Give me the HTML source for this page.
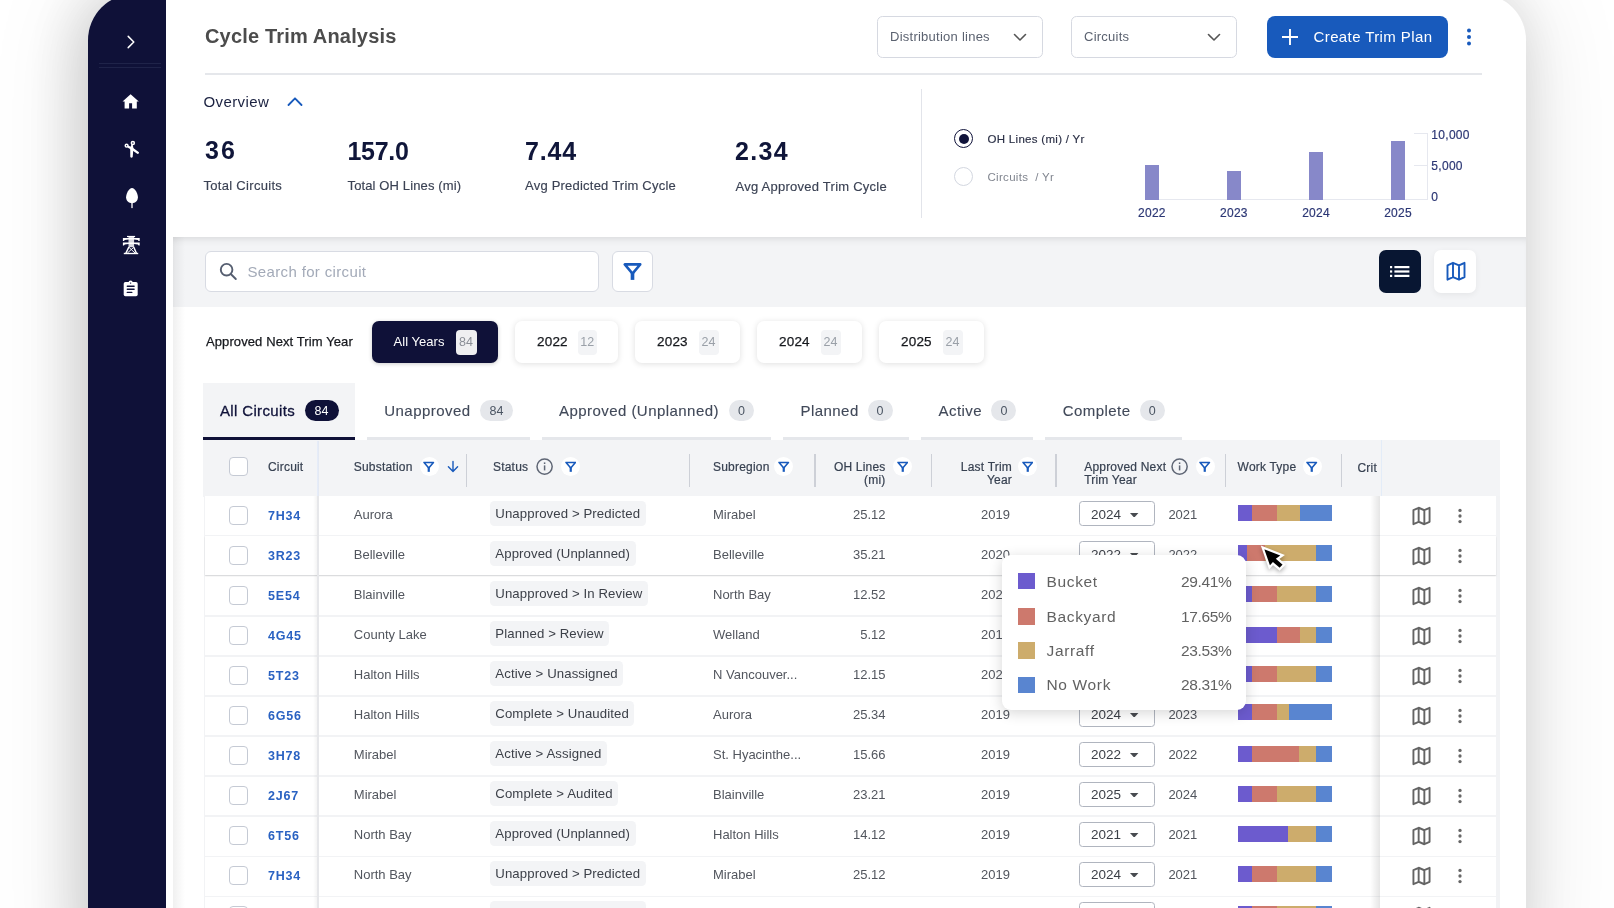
<!DOCTYPE html>
<html lang="en"><head><meta charset="utf-8"><title>Cycle Trim Analysis</title>
<style>
*{box-sizing:border-box;margin:0;padding:0}
html,body{width:1614px;height:908px;overflow:hidden;background:#fff}
body{position:relative;font-family:"Liberation Sans",sans-serif;color:#1f2937}
.abs{position:absolute}
.t{height:20px;line-height:20px;white-space:nowrap}
.hd{font-size:12px;color:#374151;letter-spacing:.2px;-webkit-text-stroke:.2px #374151}
.cell{font-size:13px;color:#52565e}
.cid{font-size:12.5px;font-weight:700;color:#2a62c2;letter-spacing:.8px}
.chip{height:25px;line-height:25px;background:#f3f4f6;border-radius:4.5px;font-size:13.2px;color:#3d4149;padding:0 5.5px;white-space:nowrap;letter-spacing:.1px}
.cb{width:18.5px;height:18.5px;border:1.6px solid #c5cad4;border-radius:4px;background:#fff}
.sel{width:76.5px;height:25.2px;border:1.2px solid #b0b5bf;border-radius:3.5px;background:#fff}
.sep{width:1.3px;background:#cdd0d7}
.row{left:204.6px;width:1291px;height:38.5px;background:#fff}
.pill{height:42px;border-radius:7px;background:#fff;box-shadow:0 1px 6px rgba(0,0,0,.13)}
.pb{height:25px;line-height:25px;width:20px;border-radius:4px;background:#f3f4f6;color:#9aa0a8;font-size:12.5px;text-align:center}
.tab{font-size:15px;color:#414959;letter-spacing:.45px;-webkit-text-stroke:.12px #414959}
.tb{height:21px;line-height:22.3px;border-radius:11px;background:#e5e7eb;color:#4b5563;font-size:12.5px;text-align:center}
.ul{height:3px;top:437px;background:#e5e7eb}
.tt{font-size:15.5px;color:#626262;letter-spacing:.65px}
.yr{font-size:12px;color:#2b3674;letter-spacing:.3px;-webkit-text-stroke:.18px #2b3674}
</style></head><body>
<div id="w" class="abs" style="left:0;top:0;width:1614px;height:908px;will-change:transform">

<div class="abs" style="left:88px;top:-6px;width:1438px;height:1000px;border-radius:46px;background:#fff;box-shadow:-10px 0 60px rgba(0,0,0,.15),0 0 100px rgba(0,0,0,.13)"></div>
<div class="abs" style="left:88px;top:-6px;width:78px;height:1000px;border-radius:46px 0 0 46px;background:#0f1138"></div>
<div class="abs" style="left:99px;top:62.6px;width:62px;height:1px;background:#1f2349"></div>
<div class="abs" style="left:99px;top:67.2px;width:62px;height:1px;background:#1f2349"></div>
<svg class="abs" style="left:124.8px;top:34.4px" width="12" height="16" viewBox="0 0 12 16"><path d="M3.2 2.4 8.8 8 3.2 13.6" fill="none" stroke="#fff" stroke-width="1.5" stroke-linecap="round" stroke-linejoin="round"/></svg>
<svg class="abs" style="left:120px;top:85px" width="24" height="24" viewBox="0 0 24 24"><path d="M10.6 9.3 18.8 16.5H16.8V23.6H12.1V18.35H9.1V23.6H4.6V16.5H2.5z" fill="#fff"/></svg>
<svg class="abs" style="left:120px;top:138px" width="24" height="24" viewBox="0 0 24 24"><g fill="#fff"><path d="M12.7 6.5 13.4 10 12.7 19Q11.5 20.3 10.3 19L10.2 10.5 11.5 6.3z"/><path d="M7.4 9.4 11 11.6 17.6 15.9Q19.3 15.7 19 14.2L12.5 9.5 8.2 7.5z"/></g><g fill="none" stroke="#fff" stroke-width="1.5"><circle cx="6.6" cy="7.7" r="1.35"/><circle cx="12.85" cy="5.05" r="1.5"/></g></svg>
<svg class="abs" style="left:124.8px;top:188px" width="14" height="21" viewBox="0 0 14 21"><path d="M7 .1C10 .1 12.9 5.6 12.9 9.3 12.9 12.8 10.3 15.2 7 15.2S1.1 12.8 1.1 9.3C1.1 5.6 4 .1 7 .1z" fill="#fff"/><rect x="6.35" y="13" width="1.3" height="7.1" fill="#fff"/></svg>
<svg class="abs" style="left:120px;top:232px" width="24" height="24" viewBox="0 0 24 24"><g fill="#fff"><rect x="7" y="3.9" width="8.1" height="1.2"/><rect x="8.5" y="5" width="5.6" height="10.2" opacity=".84"/><path d="M11.3 5.9H2.9V9H4L4.7 8.1 8.6 7.4H14L17.9 8.1 18.6 9H19.7V5.9z"/><path d="M11.3 10.4H2.9V13.5H4L4.7 12.6 8.6 11.9H14L17.9 12.6 18.6 13.5H19.7V10.4z"/><rect x="3.8" y="20.8" width="14.4" height="1.4"/></g><g fill="none" stroke="#fff"><path d="M8.9 15 5.9 21.2M13.7 15 16.4 21.2" stroke-width="1.5"/><path d="M9 15.4 15 21M13.6 15.4 7.4 21" stroke-width="1"/></g></svg>
<svg class="abs" style="left:120px;top:276px" width="24" height="24" viewBox="0 0 24 24"><rect x="3.7" y="6.1" width="14" height="14.2" rx="1.7" fill="#fff"/><circle cx="10.6" cy="6.7" r="2.1" fill="#fff"/><circle cx="10.6" cy="7.1" r=".7" fill="#0f1138"/><path d="M7.3 10.2H14.1M7.3 13.3H14.1M7.3 16.4H11.8" stroke="#0f1138" stroke-width="1.4" stroke-linecap="round" fill="none"/></svg>
<div class="abs" style="left:173px;top:236.8px;width:1353px;height:70.6px;background:#f3f4f6;box-shadow:inset 0 7px 8px -6px rgba(0,0,0,.13)"></div>
<div class="abs" style="left:173px;top:237px;width:12px;height:700px;background:linear-gradient(90deg,rgba(0,0,0,.06),rgba(0,0,0,0))"></div>
<div class="abs t " style="left:205px;top:26.5px;font-size:20px;font-weight:700;color:#4c4c4c;letter-spacing:.17px;height:30px;line-height:30px;margin-top:-5.6px">Cycle Trim Analysis</div>
<div class="abs" style="left:205px;top:73px;width:1277px;height:1.5px;background:#e5e7eb"></div>
<div class="abs" style="left:877px;top:15.6px;width:166px;height:42.2px;border:1.4px solid #d6d9e1;border-radius:5.5px;background:#fff"></div>
<div class="abs t " style="left:890px;top:26.5px;font-size:13px;color:#5b6270;letter-spacing:.25px">Distribution lines</div>
<svg class="abs" style="left:1013px;top:33px" width="14" height="9" viewBox="0 0 14 9"><path d="M1.5 1.5 7 7l5.5-5.5" fill="none" stroke="#555" stroke-width="1.6" stroke-linecap="round" stroke-linejoin="round"/></svg>
<div class="abs" style="left:1071px;top:15.6px;width:166px;height:42.2px;border:1.4px solid #d6d9e1;border-radius:5.5px;background:#fff"></div>
<div class="abs t " style="left:1084px;top:26.5px;font-size:13px;color:#5b6270;letter-spacing:.25px">Circuits</div>
<svg class="abs" style="left:1207px;top:33px" width="14" height="9" viewBox="0 0 14 9"><path d="M1.5 1.5 7 7l5.5-5.5" fill="none" stroke="#555" stroke-width="1.6" stroke-linecap="round" stroke-linejoin="round"/></svg>
<div class="abs" style="left:1266.8px;top:15.5px;width:181.4px;height:42.4px;border-radius:8px;background:#185abc"></div>
<svg class="abs" style="left:1281px;top:28px" width="18" height="18" viewBox="0 0 18 18"><path d="M9 1v16M1 9h16" stroke="#fff" stroke-width="1.9" fill="none"/></svg>
<div class="abs t " style="left:1313.5px;top:26.5px;font-size:15px;color:#fff;letter-spacing:.4px">Create Trim Plan</div>
<svg class="abs" style="left:1466px;top:27.8px;" width="6" height="18" viewBox="0 0 6 18"><circle cx="3" cy="2.4" r="2" fill="#185abc"/><circle cx="3" cy="9" r="2" fill="#185abc"/><circle cx="3" cy="15.6" r="2" fill="#185abc"/></svg>
<div class="abs t " style="left:203.5px;top:92px;font-size:15px;color:#1a2140;letter-spacing:.4px">Overview</div>
<svg class="abs" style="left:287px;top:96px" width="16" height="11" viewBox="0 0 16 11"><path d="M1.5 9 8 2.3 14.5 9" fill="none" stroke="#185abc" stroke-width="1.8" stroke-linecap="round" stroke-linejoin="round"/></svg>
<div class="abs t " style="left:205px;top:140px;font-size:25px;font-weight:700;color:#10163a;letter-spacing:2.2px;height:30px;line-height:30px;margin-top:-5px">36</div>
<div class="abs t " style="left:203.5px;top:176.4px;font-size:13px;color:#3b4254;letter-spacing:0.3px;-webkit-text-stroke:.15px #3b4254">Total Circuits</div>
<div class="abs t " style="left:347.5px;top:141px;font-size:25px;font-weight:700;color:#10163a;letter-spacing:-0.3px;height:30px;line-height:30px;margin-top:-5px">157.0</div>
<div class="abs t " style="left:347.5px;top:176.4px;font-size:13px;color:#3b4254;letter-spacing:0.13px;-webkit-text-stroke:.15px #3b4254">Total OH Lines (mi)</div>
<div class="abs t " style="left:525px;top:141px;font-size:25px;font-weight:700;color:#10163a;letter-spacing:0.8px;height:30px;line-height:30px;margin-top:-5px">7.44</div>
<div class="abs t " style="left:525px;top:176.4px;font-size:13px;color:#3b4254;letter-spacing:0.22px;-webkit-text-stroke:.15px #3b4254">Avg Predicted Trim Cycle</div>
<div class="abs t " style="left:735px;top:141px;font-size:25px;font-weight:700;color:#10163a;letter-spacing:1.3px;height:30px;line-height:30px;margin-top:-5px">2.34</div>
<div class="abs t " style="left:735.5px;top:177.4px;font-size:13px;color:#3b4254;letter-spacing:0.25px;-webkit-text-stroke:.15px #3b4254">Avg Approved Trim Cycle</div>
<div class="abs" style="left:920.5px;top:89px;width:1.3px;height:129px;background:#e2e4ea"></div>
<div class="abs" style="left:954.2px;top:129.4px;width:19px;height:19px;border-radius:50%;border:1.8px solid #10133a;background:#fff"></div>
<div class="abs" style="left:958.7px;top:133.9px;width:10px;height:10px;border-radius:50%;background:#10133a"></div>
<div class="abs" style="left:954.3px;top:167.3px;width:19px;height:19px;border-radius:50%;border:1.8px solid #d3d7e0;background:#fff"></div>
<div class="abs t " style="left:987.5px;top:129px;font-size:11.5px;color:#2a2f45;letter-spacing:.3px;-webkit-text-stroke:.15px #2a2f45">OH Lines (mi) / Yr</div>
<div class="abs t " style="left:987.5px;top:167px;font-size:11.5px;color:#80858f;letter-spacing:.3px">Circuits&nbsp; / Yr</div>
<div class="abs" style="left:1144.5px;top:199.2px;width:283.5px;height:1.2px;background:#e6e8ef"></div>
<div class="abs" style="left:1427.3px;top:133px;width:1.2px;height:67px;background:#e6e8ef"></div>
<div class="abs" style="left:1413.5px;top:133px;width:14px;height:1.2px;background:#e6e8ef"></div>
<div class="abs" style="left:1413.5px;top:165.3px;width:14px;height:1.2px;background:#e6e8ef"></div>
<div class="abs" style="left:1145px;top:165px;width:13.8px;height:34.7px;background:#8788c9"></div>
<div class="abs t yr" style="left:1051.9px;width:200px;text-align:center;top:202.7px;">2022</div>
<div class="abs" style="left:1227px;top:171.3px;width:13.8px;height:28.4px;background:#8788c9"></div>
<div class="abs t yr" style="left:1133.9px;width:200px;text-align:center;top:202.7px;">2023</div>
<div class="abs" style="left:1309.2px;top:152.2px;width:13.8px;height:47.5px;background:#8788c9"></div>
<div class="abs t yr" style="left:1216.1px;width:200px;text-align:center;top:202.7px;">2024</div>
<div class="abs" style="left:1391.2px;top:140.8px;width:13.8px;height:58.9px;background:#8788c9"></div>
<div class="abs t yr" style="left:1298.1px;width:200px;text-align:center;top:202.7px;">2025</div>
<div class="abs t yr" style="left:1431.3px;top:124.8px;">10,000</div>
<div class="abs t yr" style="left:1431.3px;top:155.6px;">5,000</div>
<div class="abs t yr" style="left:1431.3px;top:187px;">0</div>
<div class="abs" style="left:205.2px;top:250.7px;width:394px;height:41.6px;border:1.4px solid #d8dbe3;border-radius:6px;background:#fff"></div>
<svg class="abs" style="left:218px;top:261px" width="20" height="20" viewBox="0 0 20 20"><circle cx="8.6" cy="8.7" r="5.8" fill="none" stroke="#555e70" stroke-width="1.9"/><path d="M12.8 13l5 5" stroke="#555e70" stroke-width="1.9" stroke-linecap="round"/></svg>
<div class="abs t " style="left:247.5px;top:261.5px;font-size:15px;color:#a3aab8;letter-spacing:.35px">Search for circuit</div>
<div class="abs" style="left:611.5px;top:250.7px;width:41px;height:41.6px;border:1.4px solid #d8dbe3;border-radius:6px;background:#fff"></div>
<svg class="abs" style="left:622.5px;top:262.3px" width="19" height="19" viewBox="0 0 12 12"><path d="M1.1 1.5h9.8L6 7.3z" fill="none" stroke="#185abc" stroke-width="1.6" stroke-linejoin="round"/><path d="M6 6.4v4.9" stroke="#185abc" stroke-width="2.3" fill="none"/></svg>
<div class="abs" style="left:1378.6px;top:250.2px;width:42px;height:42.5px;border-radius:7px;background:#081632"></div>
<svg class="abs" style="left:1390px;top:265px" width="20" height="13" viewBox="0 0 20 13"><g fill="#fff"><rect x="0" y="1" width="2.2" height="2.2"/><rect x="0" y="5.4" width="2.2" height="2.2"/><rect x="0" y="9.8" width="2.2" height="2.2"/><rect x="4.4" y="1" width="15" height="2.2"/><rect x="4.4" y="5.4" width="15" height="2.2"/><rect x="4.4" y="9.8" width="15" height="2.2"/></g></svg>
<div class="abs" style="left:1434.4px;top:250.2px;width:42px;height:42.5px;border-radius:7px;background:#fff;box-shadow:0 2px 6px rgba(0,0,0,.06)"></div>
<svg class="abs" style="left:1445.6px;top:261.05px;" width="20" height="20.5" viewBox="0 0 20 20" preserveAspectRatio="none"><path d="M1.5 4.2 7 1.8l6 2.4 5.5-2.4v14L13 18.2 7 15.8 1.5 18.2zM7 1.8v14M13 4.2v14" fill="none" stroke="#185abc" stroke-width="1.9" stroke-linejoin="round"/></svg>
<div class="abs t " style="left:206px;top:332px;font-size:13px;color:#16181d;letter-spacing:.1px;-webkit-text-stroke:.25px #16181d">Approved Next Trim Year</div>
<div class="abs" style="left:372px;top:321px;width:125.5px;height:42px;border-radius:7px;background:#0f1138;box-shadow:0 1px 4px rgba(0,0,0,.2)"></div>
<div class="abs t " style="left:393.5px;top:332px;font-size:13px;color:#fff;letter-spacing:.05px">All Years</div>
<div class="abs pb" style="left:455.5px;top:329.5px;width:21px;background:#efeff1;color:#8b8f97">84</div>
<div class="abs pill" style="left:515px;top:321px;width:102.5px"></div>
<div class="abs t " style="left:537px;top:332px;font-size:13.5px;color:#16181d;letter-spacing:.2px;-webkit-text-stroke:.25px #16181d">2022</div>
<div class="abs pb" style="left:578px;top:329.5px;width:18.5px">12</div>
<div class="abs pill" style="left:635px;top:321px;width:104.5px"></div>
<div class="abs t " style="left:657px;top:332px;font-size:13.5px;color:#16181d;letter-spacing:.2px;-webkit-text-stroke:.25px #16181d">2023</div>
<div class="abs pb" style="left:698.5px;top:329.5px;width:20px">24</div>
<div class="abs pill" style="left:757px;top:321px;width:104.5px"></div>
<div class="abs t " style="left:779px;top:332px;font-size:13.5px;color:#16181d;letter-spacing:.2px;-webkit-text-stroke:.25px #16181d">2024</div>
<div class="abs pb" style="left:820.5px;top:329.5px;width:20px">24</div>
<div class="abs pill" style="left:879px;top:321px;width:104.5px"></div>
<div class="abs t " style="left:901px;top:332px;font-size:13.5px;color:#16181d;letter-spacing:.2px;-webkit-text-stroke:.25px #16181d">2025</div>
<div class="abs pb" style="left:942.5px;top:329.5px;width:20px">24</div>
<div class="abs" style="left:202.8px;top:383.2px;width:152.4px;height:56.8px;background:#f3f4f6"></div>
<div class="abs" style="left:202.8px;top:436.8px;width:152.4px;height:3.2px;background:#0f1138"></div>
<div class="abs t tab" style="left:220px;top:400.5px;color:#10133a;letter-spacing:.35px;-webkit-text-stroke:.3px #10133a">All Circuits</div>
<div class="abs tb" style="left:304.5px;top:400px;width:34px;background:#0f1138;color:#fff">84</div>
<div class="abs ul" style="left:367px;width:163px"></div>
<div class="abs t tab" style="left:384.3px;top:400.5px;">Unapproved</div>
<div class="abs tb" style="left:479.7px;top:400px;width:33.5px">84</div>
<div class="abs ul" style="left:542px;width:229px"></div>
<div class="abs t tab" style="left:559px;top:400.5px;">Approved (Unplanned)</div>
<div class="abs tb" style="left:729px;top:400px;width:25px">0</div>
<div class="abs ul" style="left:783px;width:126px"></div>
<div class="abs t tab" style="left:800.5px;top:400.5px;">Planned</div>
<div class="abs tb" style="left:867.5px;top:400px;width:25px">0</div>
<div class="abs ul" style="left:921px;width:112px"></div>
<div class="abs t tab" style="left:938.5px;top:400.5px;">Active</div>
<div class="abs tb" style="left:991.4px;top:400px;width:25px">0</div>
<div class="abs ul" style="left:1045px;width:136.5px"></div>
<div class="abs t tab" style="left:1062.7px;top:400.5px;">Complete</div>
<div class="abs tb" style="left:1139.7px;top:400px;width:25px">0</div>
<div class="abs" style="left:203px;top:440.2px;width:1296.5px;height:56.5px;background:#f3f4f6"></div>
<div class="abs" style="left:203.5px;top:496px;width:1296px;height:420px;background:#f2f3f5"></div>
<div class="abs cb" style="left:229.3px;top:457px"></div>
<div class="abs t hd" style="left:268px;top:456.9px;">Circuit</div>
<div class="abs t hd" style="left:353.8px;top:456.9px;">Substation</div>
<div class="abs" style="left:419.7px;top:457px;width:19px;height:19px;border-radius:50%;background:#fff"></div><svg class="abs" style="left:423.45px;top:460.75px" width="11.5" height="11.5" viewBox="0 0 12 12"><path d="M1.1 1.5h9.8L6 7.3z" fill="none" stroke="#185abc" stroke-width="1.65" stroke-linejoin="round"/><path d="M6 6.4v4.9" stroke="#185abc" stroke-width="2.3" fill="none"/></svg>
<svg class="abs" style="left:447.3px;top:460px" width="12" height="13" viewBox="0 0 12 13"><path d="M6 1.5v9.5M1.4 6.8 6 11.4l4.6-4.6" fill="none" stroke="#185abc" stroke-width="1.4" stroke-linecap="round" stroke-linejoin="round"/></svg>
<div class="abs t hd" style="left:493px;top:456.9px;">Status</div>
<svg class="abs" style="left:536.4px;top:458.1px" width="17.2" height="17.2" viewBox="0 0 17.2 17.2"><circle cx="8.6" cy="8.6" r="7.6" fill="none" stroke="#5f6675" stroke-width="1.5"/><rect x="7.85" y="7.4" width="1.5" height="5" fill="#5f6675"/><rect x="7.85" y="4.4" width="1.5" height="1.6" fill="#5f6675"/></svg>
<div class="abs" style="left:560.9px;top:457px;width:19px;height:19px;border-radius:50%;background:#fff"></div><svg class="abs" style="left:564.65px;top:460.75px" width="11.5" height="11.5" viewBox="0 0 12 12"><path d="M1.1 1.5h9.8L6 7.3z" fill="none" stroke="#185abc" stroke-width="1.65" stroke-linejoin="round"/><path d="M6 6.4v4.9" stroke="#185abc" stroke-width="2.3" fill="none"/></svg>
<div class="abs t hd" style="left:713px;top:456.9px;">Subregion</div>
<div class="abs" style="left:774.3px;top:457px;width:19px;height:19px;border-radius:50%;background:#fff"></div><svg class="abs" style="left:778.05px;top:460.75px" width="11.5" height="11.5" viewBox="0 0 12 12"><path d="M1.1 1.5h9.8L6 7.3z" fill="none" stroke="#185abc" stroke-width="1.65" stroke-linejoin="round"/><path d="M6 6.4v4.9" stroke="#185abc" stroke-width="2.3" fill="none"/></svg>
<div class="abs t hd" style="right:728.5px;top:456.9px;">OH Lines</div>
<div class="abs t hd" style="right:728.5px;top:470.3px;">(mi)</div>
<div class="abs" style="left:893.1px;top:457px;width:19px;height:19px;border-radius:50%;background:#fff"></div><svg class="abs" style="left:896.85px;top:460.75px" width="11.5" height="11.5" viewBox="0 0 12 12"><path d="M1.1 1.5h9.8L6 7.3z" fill="none" stroke="#185abc" stroke-width="1.65" stroke-linejoin="round"/><path d="M6 6.4v4.9" stroke="#185abc" stroke-width="2.3" fill="none"/></svg>
<div class="abs t hd" style="right:602px;top:456.9px;">Last Trim</div>
<div class="abs t hd" style="right:602px;top:470.3px;">Year</div>
<div class="abs" style="left:1018px;top:457px;width:19px;height:19px;border-radius:50%;background:#fff"></div><svg class="abs" style="left:1021.75px;top:460.75px" width="11.5" height="11.5" viewBox="0 0 12 12"><path d="M1.1 1.5h9.8L6 7.3z" fill="none" stroke="#185abc" stroke-width="1.65" stroke-linejoin="round"/><path d="M6 6.4v4.9" stroke="#185abc" stroke-width="2.3" fill="none"/></svg>
<div class="abs t hd" style="left:1084.2px;top:456.9px;">Approved Next</div>
<div class="abs t hd" style="left:1084.2px;top:470.3px;">Trim Year</div>
<svg class="abs" style="left:1171.4px;top:458.1px" width="17.2" height="17.2" viewBox="0 0 17.2 17.2"><circle cx="8.6" cy="8.6" r="7.6" fill="none" stroke="#5f6675" stroke-width="1.5"/><rect x="7.85" y="7.4" width="1.5" height="5" fill="#5f6675"/><rect x="7.85" y="4.4" width="1.5" height="1.6" fill="#5f6675"/></svg>
<div class="abs" style="left:1195.7px;top:457px;width:19px;height:19px;border-radius:50%;background:#fff"></div><svg class="abs" style="left:1199.45px;top:460.75px" width="11.5" height="11.5" viewBox="0 0 12 12"><path d="M1.1 1.5h9.8L6 7.3z" fill="none" stroke="#185abc" stroke-width="1.65" stroke-linejoin="round"/><path d="M6 6.4v4.9" stroke="#185abc" stroke-width="2.3" fill="none"/></svg>
<div class="abs t hd" style="left:1237.6px;top:456.9px;">Work Type</div>
<div class="abs" style="left:1302.5px;top:457px;width:19px;height:19px;border-radius:50%;background:#fff"></div><svg class="abs" style="left:1306.25px;top:460.75px" width="11.5" height="11.5" viewBox="0 0 12 12"><path d="M1.1 1.5h9.8L6 7.3z" fill="none" stroke="#185abc" stroke-width="1.65" stroke-linejoin="round"/><path d="M6 6.4v4.9" stroke="#185abc" stroke-width="2.3" fill="none"/></svg>
<div class="abs t hd" style="left:1357.5px;top:457.9px;">Crit</div>
<div class="abs sep" style="left:465.7px;top:453.5px;height:33px"></div>
<div class="abs sep" style="left:688.9px;top:453.5px;height:33px"></div>
<div class="abs sep" style="left:814.4px;top:453.5px;height:33px"></div>
<div class="abs sep" style="left:930.8px;top:453.5px;height:33px"></div>
<div class="abs sep" style="left:1055.4px;top:453.5px;height:33px"></div>
<div class="abs sep" style="left:1224.7px;top:453.5px;height:33px"></div>
<div class="abs sep" style="left:1340.9px;top:453.5px;height:33px"></div>
<div class="abs row" style="top:496.3px;"></div>
<div class="abs cb" style="left:229.3px;top:506.3px;"></div>
<div class="abs t cid" style="left:268px;top:505.8px;">7H34</div>
<div class="abs t cell" style="left:353.8px;top:504.5px;">Aurora</div>
<div class="abs chip" style="left:489.8px;top:501.1px;">Unapproved &gt; Predicted</div>
<div class="abs t cell" style="left:713px;top:504.5px;">Mirabel</div>
<div class="abs t cell" style="right:728.5px;top:504.5px;">25.12</div>
<div class="abs t cell" style="left:895.5px;width:200px;text-align:center;top:504.5px;">2019</div>
<div class="abs sel" style="left:1078.8px;top:501.2px;"></div>
<div class="abs t cell" style="left:1091px;top:504.8px;font-size:13.5px;color:#3b3f47">2024</div>
<svg class="abs" style="left:1130.3px;top:512.5px;" width="8.4" height="4.7" viewBox="0 0 9 5"><path d="M0 0h9L4.5 5z" fill="#484b50"/></svg>
<div class="abs t cell" style="left:1168.4px;top:504.5px;">2021</div>
<div class="abs" style="left:1237.6px;top:505.3px;width:94.4px;height:15.9px;background:linear-gradient(90deg,#6c5bce 0px 14.5px,#cd796d 14.5px 38.9px,#cdac6c 38.9px 62px,#5985d0 62px 95px);"></div>
<svg class="abs" style="left:1411.7px;top:505.7px;" width="19" height="20" viewBox="0 0 20 20" preserveAspectRatio="none"><path d="M1.5 4.2 7 1.8l6 2.4 5.5-2.4v14L13 18.2 7 15.8 1.5 18.2zM7 1.8v14M13 4.2v14" fill="none" stroke="#646464" stroke-width="2" stroke-linejoin="round"/></svg>
<svg class="abs" style="left:1456.7px;top:506.9px;" width="6" height="18" viewBox="0 0 6 18"><circle cx="3" cy="3.4" r="1.65" fill="#666"/><circle cx="3" cy="9" r="1.65" fill="#666"/><circle cx="3" cy="14.6" r="1.65" fill="#666"/></svg>
<div class="abs row" style="top:536.39px;box-shadow:0 1px 1.5px rgba(0,0,0,.13);z-index:2;"></div>
<div class="abs cb" style="left:229.3px;top:546.3px;z-index:3;"></div>
<div class="abs t cid" style="left:268px;top:545.8px;z-index:3;">3R23</div>
<div class="abs t cell" style="left:353.8px;top:544.5px;z-index:3;">Belleville</div>
<div class="abs chip" style="left:489.8px;top:541.1px;z-index:3;">Approved (Unplanned)</div>
<div class="abs t cell" style="left:713px;top:544.5px;z-index:3;">Belleville</div>
<div class="abs t cell" style="right:728.5px;top:544.5px;z-index:3;">35.21</div>
<div class="abs t cell" style="left:895.5px;width:200px;text-align:center;top:544.5px;z-index:3;">2020</div>
<div class="abs sel" style="left:1078.8px;top:541.3px;z-index:3;"></div>
<div class="abs t cell" style="left:1091px;top:544.8px;z-index:3;font-size:13.5px;color:#3b3f47">2022</div>
<svg class="abs" style="left:1130.3px;top:552.5px;z-index:3;" width="8.4" height="4.7" viewBox="0 0 9 5"><path d="M0 0h9L4.5 5z" fill="#484b50"/></svg>
<div class="abs t cell" style="left:1168.4px;top:544.5px;z-index:3;">2022</div>
<div class="abs" style="left:1237.6px;top:545px;width:94.4px;height:15.9px;background:linear-gradient(90deg,#6c5bce 0px 9.2px,#cd796d 9.2px 26.6px,#cdac6c 26.6px 77.8px,#5985d0 77.8px 95px);z-index:3;"></div>
<svg class="abs" style="left:1411.7px;top:545.7px;z-index:3;" width="19" height="20" viewBox="0 0 20 20" preserveAspectRatio="none"><path d="M1.5 4.2 7 1.8l6 2.4 5.5-2.4v14L13 18.2 7 15.8 1.5 18.2zM7 1.8v14M13 4.2v14" fill="none" stroke="#646464" stroke-width="2" stroke-linejoin="round"/></svg>
<svg class="abs" style="left:1456.7px;top:546.9px;z-index:3;" width="6" height="18" viewBox="0 0 6 18"><circle cx="3" cy="3.4" r="1.65" fill="#666"/><circle cx="3" cy="9" r="1.65" fill="#666"/><circle cx="3" cy="14.6" r="1.65" fill="#666"/></svg>
<div class="abs row" style="top:576.48px;"></div>
<div class="abs cb" style="left:229.3px;top:586.3px;"></div>
<div class="abs t cid" style="left:268px;top:585.8px;">5E54</div>
<div class="abs t cell" style="left:353.8px;top:584.5px;">Blainville</div>
<div class="abs chip" style="left:489.8px;top:581.1px;">Unapproved &gt; In Review</div>
<div class="abs t cell" style="left:713px;top:584.5px;">North Bay</div>
<div class="abs t cell" style="right:728.5px;top:584.5px;">12.52</div>
<div class="abs t cell" style="left:895.5px;width:200px;text-align:center;top:584.5px;">2020</div>
<div class="abs sel" style="left:1078.8px;top:581.4px;"></div>
<div class="abs t cell" style="left:1091px;top:584.8px;font-size:13.5px;color:#3b3f47">2023</div>
<svg class="abs" style="left:1130.3px;top:592.5px;" width="8.4" height="4.7" viewBox="0 0 9 5"><path d="M0 0h9L4.5 5z" fill="#484b50"/></svg>
<div class="abs t cell" style="left:1168.4px;top:584.5px;">2022</div>
<div class="abs" style="left:1237.6px;top:585.9px;width:94.4px;height:15.9px;background:linear-gradient(90deg,#6c5bce 0px 14.5px,#cd796d 14.5px 38.9px,#cdac6c 38.9px 77.8px,#5985d0 77.8px 95px);"></div>
<svg class="abs" style="left:1411.7px;top:585.7px;" width="19" height="20" viewBox="0 0 20 20" preserveAspectRatio="none"><path d="M1.5 4.2 7 1.8l6 2.4 5.5-2.4v14L13 18.2 7 15.8 1.5 18.2zM7 1.8v14M13 4.2v14" fill="none" stroke="#646464" stroke-width="2" stroke-linejoin="round"/></svg>
<svg class="abs" style="left:1456.7px;top:586.9px;" width="6" height="18" viewBox="0 0 6 18"><circle cx="3" cy="3.4" r="1.65" fill="#666"/><circle cx="3" cy="9" r="1.65" fill="#666"/><circle cx="3" cy="14.6" r="1.65" fill="#666"/></svg>
<div class="abs row" style="top:616.57px;"></div>
<div class="abs cb" style="left:229.3px;top:626.3px;"></div>
<div class="abs t cid" style="left:268px;top:625.8px;">4G45</div>
<div class="abs t cell" style="left:353.8px;top:624.5px;">County Lake</div>
<div class="abs chip" style="left:489.8px;top:621.1px;">Planned &gt; Review</div>
<div class="abs t cell" style="left:713px;top:624.5px;">Welland</div>
<div class="abs t cell" style="right:728.5px;top:624.5px;">5.12</div>
<div class="abs t cell" style="left:895.5px;width:200px;text-align:center;top:624.5px;">2019</div>
<div class="abs sel" style="left:1078.8px;top:621.5px;"></div>
<div class="abs t cell" style="left:1091px;top:624.8px;font-size:13.5px;color:#3b3f47">2022</div>
<svg class="abs" style="left:1130.3px;top:632.5px;" width="8.4" height="4.7" viewBox="0 0 9 5"><path d="M0 0h9L4.5 5z" fill="#484b50"/></svg>
<div class="abs t cell" style="left:1168.4px;top:624.5px;">2022</div>
<div class="abs" style="left:1237.6px;top:627.2px;width:94.4px;height:15.9px;background:linear-gradient(90deg,#6c5bce 0px 38.9px,#cd796d 38.9px 62px,#cdac6c 62px 77.8px,#5985d0 77.8px 95px);"></div>
<svg class="abs" style="left:1411.7px;top:625.7px;" width="19" height="20" viewBox="0 0 20 20" preserveAspectRatio="none"><path d="M1.5 4.2 7 1.8l6 2.4 5.5-2.4v14L13 18.2 7 15.8 1.5 18.2zM7 1.8v14M13 4.2v14" fill="none" stroke="#646464" stroke-width="2" stroke-linejoin="round"/></svg>
<svg class="abs" style="left:1456.7px;top:626.9px;" width="6" height="18" viewBox="0 0 6 18"><circle cx="3" cy="3.4" r="1.65" fill="#666"/><circle cx="3" cy="9" r="1.65" fill="#666"/><circle cx="3" cy="14.6" r="1.65" fill="#666"/></svg>
<div class="abs row" style="top:656.66px;"></div>
<div class="abs cb" style="left:229.3px;top:666.3px;"></div>
<div class="abs t cid" style="left:268px;top:665.8px;">5T23</div>
<div class="abs t cell" style="left:353.8px;top:664.5px;">Halton Hills</div>
<div class="abs chip" style="left:489.8px;top:661.1px;">Active &gt; Unassigned</div>
<div class="abs t cell" style="left:713px;top:664.5px;">N Vancouver...</div>
<div class="abs t cell" style="right:728.5px;top:664.5px;">12.15</div>
<div class="abs t cell" style="left:895.5px;width:200px;text-align:center;top:664.5px;">2020</div>
<div class="abs sel" style="left:1078.8px;top:661.6px;"></div>
<div class="abs t cell" style="left:1091px;top:664.8px;font-size:13.5px;color:#3b3f47">2023</div>
<svg class="abs" style="left:1130.3px;top:672.5px;" width="8.4" height="4.7" viewBox="0 0 9 5"><path d="M0 0h9L4.5 5z" fill="#484b50"/></svg>
<div class="abs t cell" style="left:1168.4px;top:664.5px;">2023</div>
<div class="abs" style="left:1237.6px;top:666.1px;width:94.4px;height:15.9px;background:linear-gradient(90deg,#6c5bce 0px 14.5px,#cd796d 14.5px 38.9px,#cdac6c 38.9px 77.8px,#5985d0 77.8px 95px);"></div>
<svg class="abs" style="left:1411.7px;top:665.7px;" width="19" height="20" viewBox="0 0 20 20" preserveAspectRatio="none"><path d="M1.5 4.2 7 1.8l6 2.4 5.5-2.4v14L13 18.2 7 15.8 1.5 18.2zM7 1.8v14M13 4.2v14" fill="none" stroke="#646464" stroke-width="2" stroke-linejoin="round"/></svg>
<svg class="abs" style="left:1456.7px;top:666.9px;" width="6" height="18" viewBox="0 0 6 18"><circle cx="3" cy="3.4" r="1.65" fill="#666"/><circle cx="3" cy="9" r="1.65" fill="#666"/><circle cx="3" cy="14.6" r="1.65" fill="#666"/></svg>
<div class="abs row" style="top:696.75px;"></div>
<div class="abs cb" style="left:229.3px;top:706.3px;"></div>
<div class="abs t cid" style="left:268px;top:705.8px;">6G56</div>
<div class="abs t cell" style="left:353.8px;top:704.5px;">Halton Hills</div>
<div class="abs chip" style="left:489.8px;top:701.1px;">Complete &gt; Unaudited</div>
<div class="abs t cell" style="left:713px;top:704.5px;">Aurora</div>
<div class="abs t cell" style="right:728.5px;top:704.5px;">25.34</div>
<div class="abs t cell" style="left:895.5px;width:200px;text-align:center;top:704.5px;">2019</div>
<div class="abs sel" style="left:1078.8px;top:701.7px;"></div>
<div class="abs t cell" style="left:1091px;top:704.8px;font-size:13.5px;color:#3b3f47">2024</div>
<svg class="abs" style="left:1130.3px;top:712.5px;" width="8.4" height="4.7" viewBox="0 0 9 5"><path d="M0 0h9L4.5 5z" fill="#484b50"/></svg>
<div class="abs t cell" style="left:1168.4px;top:704.5px;">2023</div>
<div class="abs" style="left:1237.6px;top:704px;width:94.4px;height:15.9px;background:linear-gradient(90deg,#6c5bce 0px 14.5px,#cd796d 14.5px 38.9px,#cdac6c 38.9px 50.6px,#5985d0 50.6px 95px);"></div>
<svg class="abs" style="left:1411.7px;top:705.7px;" width="19" height="20" viewBox="0 0 20 20" preserveAspectRatio="none"><path d="M1.5 4.2 7 1.8l6 2.4 5.5-2.4v14L13 18.2 7 15.8 1.5 18.2zM7 1.8v14M13 4.2v14" fill="none" stroke="#646464" stroke-width="2" stroke-linejoin="round"/></svg>
<svg class="abs" style="left:1456.7px;top:706.9px;" width="6" height="18" viewBox="0 0 6 18"><circle cx="3" cy="3.4" r="1.65" fill="#666"/><circle cx="3" cy="9" r="1.65" fill="#666"/><circle cx="3" cy="14.6" r="1.65" fill="#666"/></svg>
<div class="abs row" style="top:736.84px;"></div>
<div class="abs cb" style="left:229.3px;top:746.3px;"></div>
<div class="abs t cid" style="left:268px;top:745.8px;">3H78</div>
<div class="abs t cell" style="left:353.8px;top:744.5px;">Mirabel</div>
<div class="abs chip" style="left:489.8px;top:741.1px;">Active &gt; Assigned</div>
<div class="abs t cell" style="left:713px;top:744.5px;">St. Hyacinthe...</div>
<div class="abs t cell" style="right:728.5px;top:744.5px;">15.66</div>
<div class="abs t cell" style="left:895.5px;width:200px;text-align:center;top:744.5px;">2019</div>
<div class="abs sel" style="left:1078.8px;top:741.8px;"></div>
<div class="abs t cell" style="left:1091px;top:744.8px;font-size:13.5px;color:#3b3f47">2022</div>
<svg class="abs" style="left:1130.3px;top:752.5px;" width="8.4" height="4.7" viewBox="0 0 9 5"><path d="M0 0h9L4.5 5z" fill="#484b50"/></svg>
<div class="abs t cell" style="left:1168.4px;top:744.5px;">2022</div>
<div class="abs" style="left:1237.6px;top:746.05px;width:94.4px;height:15.9px;background:linear-gradient(90deg,#6c5bce 0px 14.5px,#cd796d 14.5px 61.1px,#cdac6c 61.1px 77.8px,#5985d0 77.8px 95px);"></div>
<svg class="abs" style="left:1411.7px;top:745.7px;" width="19" height="20" viewBox="0 0 20 20" preserveAspectRatio="none"><path d="M1.5 4.2 7 1.8l6 2.4 5.5-2.4v14L13 18.2 7 15.8 1.5 18.2zM7 1.8v14M13 4.2v14" fill="none" stroke="#646464" stroke-width="2" stroke-linejoin="round"/></svg>
<svg class="abs" style="left:1456.7px;top:746.9px;" width="6" height="18" viewBox="0 0 6 18"><circle cx="3" cy="3.4" r="1.65" fill="#666"/><circle cx="3" cy="9" r="1.65" fill="#666"/><circle cx="3" cy="14.6" r="1.65" fill="#666"/></svg>
<div class="abs row" style="top:776.93px;"></div>
<div class="abs cb" style="left:229.3px;top:786.3px;"></div>
<div class="abs t cid" style="left:268px;top:785.8px;">2J67</div>
<div class="abs t cell" style="left:353.8px;top:784.5px;">Mirabel</div>
<div class="abs chip" style="left:489.8px;top:781.1px;">Complete &gt; Audited</div>
<div class="abs t cell" style="left:713px;top:784.5px;">Blainville</div>
<div class="abs t cell" style="right:728.5px;top:784.5px;">23.21</div>
<div class="abs t cell" style="left:895.5px;width:200px;text-align:center;top:784.5px;">2019</div>
<div class="abs sel" style="left:1078.8px;top:781.9px;"></div>
<div class="abs t cell" style="left:1091px;top:784.8px;font-size:13.5px;color:#3b3f47">2025</div>
<svg class="abs" style="left:1130.3px;top:792.5px;" width="8.4" height="4.7" viewBox="0 0 9 5"><path d="M0 0h9L4.5 5z" fill="#484b50"/></svg>
<div class="abs t cell" style="left:1168.4px;top:784.5px;">2024</div>
<div class="abs" style="left:1237.6px;top:786px;width:94.4px;height:15.9px;background:linear-gradient(90deg,#6c5bce 0px 14.5px,#cd796d 14.5px 38.9px,#cdac6c 38.9px 77.8px,#5985d0 77.8px 95px);"></div>
<svg class="abs" style="left:1411.7px;top:785.7px;" width="19" height="20" viewBox="0 0 20 20" preserveAspectRatio="none"><path d="M1.5 4.2 7 1.8l6 2.4 5.5-2.4v14L13 18.2 7 15.8 1.5 18.2zM7 1.8v14M13 4.2v14" fill="none" stroke="#646464" stroke-width="2" stroke-linejoin="round"/></svg>
<svg class="abs" style="left:1456.7px;top:786.9px;" width="6" height="18" viewBox="0 0 6 18"><circle cx="3" cy="3.4" r="1.65" fill="#666"/><circle cx="3" cy="9" r="1.65" fill="#666"/><circle cx="3" cy="14.6" r="1.65" fill="#666"/></svg>
<div class="abs row" style="top:817.02px;"></div>
<div class="abs cb" style="left:229.3px;top:826.3px;"></div>
<div class="abs t cid" style="left:268px;top:825.8px;">6T56</div>
<div class="abs t cell" style="left:353.8px;top:824.5px;">North Bay</div>
<div class="abs chip" style="left:489.8px;top:821.1px;">Approved (Unplanned)</div>
<div class="abs t cell" style="left:713px;top:824.5px;">Halton Hills</div>
<div class="abs t cell" style="right:728.5px;top:824.5px;">14.12</div>
<div class="abs t cell" style="left:895.5px;width:200px;text-align:center;top:824.5px;">2019</div>
<div class="abs sel" style="left:1078.8px;top:822px;"></div>
<div class="abs t cell" style="left:1091px;top:824.8px;font-size:13.5px;color:#3b3f47">2021</div>
<svg class="abs" style="left:1130.3px;top:832.5px;" width="8.4" height="4.7" viewBox="0 0 9 5"><path d="M0 0h9L4.5 5z" fill="#484b50"/></svg>
<div class="abs t cell" style="left:1168.4px;top:824.5px;">2021</div>
<div class="abs" style="left:1237.6px;top:826px;width:94.4px;height:15.9px;background:linear-gradient(90deg,#6c5bce 0px 50.4px,#cdac6c 50.4px 77.8px,#5985d0 77.8px 95px);"></div>
<svg class="abs" style="left:1411.7px;top:825.7px;" width="19" height="20" viewBox="0 0 20 20" preserveAspectRatio="none"><path d="M1.5 4.2 7 1.8l6 2.4 5.5-2.4v14L13 18.2 7 15.8 1.5 18.2zM7 1.8v14M13 4.2v14" fill="none" stroke="#646464" stroke-width="2" stroke-linejoin="round"/></svg>
<svg class="abs" style="left:1456.7px;top:826.9px;" width="6" height="18" viewBox="0 0 6 18"><circle cx="3" cy="3.4" r="1.65" fill="#666"/><circle cx="3" cy="9" r="1.65" fill="#666"/><circle cx="3" cy="14.6" r="1.65" fill="#666"/></svg>
<div class="abs row" style="top:857.11px;"></div>
<div class="abs cb" style="left:229.3px;top:866.3px;"></div>
<div class="abs t cid" style="left:268px;top:865.8px;">7H34</div>
<div class="abs t cell" style="left:353.8px;top:864.5px;">North Bay</div>
<div class="abs chip" style="left:489.8px;top:861.1px;">Unapproved &gt; Predicted</div>
<div class="abs t cell" style="left:713px;top:864.5px;">Mirabel</div>
<div class="abs t cell" style="right:728.5px;top:864.5px;">25.12</div>
<div class="abs t cell" style="left:895.5px;width:200px;text-align:center;top:864.5px;">2019</div>
<div class="abs sel" style="left:1078.8px;top:862.1px;"></div>
<div class="abs t cell" style="left:1091px;top:864.8px;font-size:13.5px;color:#3b3f47">2024</div>
<svg class="abs" style="left:1130.3px;top:872.5px;" width="8.4" height="4.7" viewBox="0 0 9 5"><path d="M0 0h9L4.5 5z" fill="#484b50"/></svg>
<div class="abs t cell" style="left:1168.4px;top:864.5px;">2021</div>
<div class="abs" style="left:1237.6px;top:866px;width:94.4px;height:15.9px;background:linear-gradient(90deg,#6c5bce 0px 14.5px,#cd796d 14.5px 38.9px,#cdac6c 38.9px 77.8px,#5985d0 77.8px 95px);"></div>
<svg class="abs" style="left:1411.7px;top:865.7px;" width="19" height="20" viewBox="0 0 20 20" preserveAspectRatio="none"><path d="M1.5 4.2 7 1.8l6 2.4 5.5-2.4v14L13 18.2 7 15.8 1.5 18.2zM7 1.8v14M13 4.2v14" fill="none" stroke="#646464" stroke-width="2" stroke-linejoin="round"/></svg>
<svg class="abs" style="left:1456.7px;top:866.9px;" width="6" height="18" viewBox="0 0 6 18"><circle cx="3" cy="3.4" r="1.65" fill="#666"/><circle cx="3" cy="9" r="1.65" fill="#666"/><circle cx="3" cy="14.6" r="1.65" fill="#666"/></svg>
<div class="abs row" style="top:897.2px;"></div>
<div class="abs cb" style="left:229.3px;top:906.3px;"></div>
<div class="abs t cid" style="left:268px;top:905.8px;">8K12</div>
<div class="abs t cell" style="left:353.8px;top:904.5px;">Welland</div>
<div class="abs chip" style="left:489.8px;top:901.1px;">Unapproved &gt; Predicted</div>
<div class="abs t cell" style="left:713px;top:904.5px;">Welland</div>
<div class="abs t cell" style="right:728.5px;top:904.5px;">18.40</div>
<div class="abs t cell" style="left:895.5px;width:200px;text-align:center;top:904.5px;">2019</div>
<div class="abs sel" style="left:1078.8px;top:902.2px;"></div>
<div class="abs t cell" style="left:1091px;top:904.8px;font-size:13.5px;color:#3b3f47">2023</div>
<svg class="abs" style="left:1130.3px;top:912.5px;" width="8.4" height="4.7" viewBox="0 0 9 5"><path d="M0 0h9L4.5 5z" fill="#484b50"/></svg>
<div class="abs t cell" style="left:1168.4px;top:904.5px;">2022</div>
<div class="abs" style="left:1237.6px;top:906px;width:94.4px;height:15.9px;background:linear-gradient(90deg,#6c5bce 0px 14.5px,#cd796d 14.5px 38.9px,#cdac6c 38.9px 77.8px,#5985d0 77.8px 95px);"></div>
<svg class="abs" style="left:1411.7px;top:905.7px;" width="19" height="20" viewBox="0 0 20 20" preserveAspectRatio="none"><path d="M1.5 4.2 7 1.8l6 2.4 5.5-2.4v14L13 18.2 7 15.8 1.5 18.2zM7 1.8v14M13 4.2v14" fill="none" stroke="#646464" stroke-width="2" stroke-linejoin="round"/></svg>
<svg class="abs" style="left:1456.7px;top:906.9px;" width="6" height="18" viewBox="0 0 6 18"><circle cx="3" cy="3.4" r="1.65" fill="#666"/><circle cx="3" cy="9" r="1.65" fill="#666"/><circle cx="3" cy="14.6" r="1.65" fill="#666"/></svg>
<div class="abs" style="left:316.8px;top:441px;width:2px;height:55px;background:linear-gradient(90deg,#e6edfb,#e3e8f1);z-index:4"></div>
<div class="abs" style="left:317.2px;top:496px;width:1.8px;height:420px;background:#e6e7ea;z-index:4"></div>
<div class="abs" style="left:313px;top:496px;width:4.2px;height:420px;background:linear-gradient(90deg,rgba(0,0,0,0),rgba(0,0,0,.045));z-index:4"></div>
<div class="abs" style="left:1369.5px;top:496px;width:10px;height:420px;background:linear-gradient(90deg,rgba(0,0,0,0),rgba(0,0,0,.1));z-index:4"></div>
<div class="abs" style="left:1380.5px;top:440px;width:1px;height:56px;background:#e3ecf8"></div>
<div class="abs" style="left:1001.7px;top:554.8px;width:244.5px;height:155.4px;border-radius:9px;background:#fff;box-shadow:0 3px 14px rgba(0,0,0,.16);z-index:10"></div>
<div class="abs" style="left:1018.4px;top:573.1px;width:16.8px;height:16.4px;background:#6c5bce;z-index:11"></div>
<div class="abs t tt" style="left:1046.5px;top:571.8px;z-index:11">Bucket</div>
<div class="abs t tt" style="right:382.5px;top:571.8px;z-index:11;letter-spacing:-.35px">29.41%</div>
<div class="abs" style="left:1018.4px;top:608.3px;width:16.8px;height:16.4px;background:#cd796d;z-index:11"></div>
<div class="abs t tt" style="left:1046.5px;top:607px;z-index:11">Backyard</div>
<div class="abs t tt" style="right:382.5px;top:607px;z-index:11;letter-spacing:-.35px">17.65%</div>
<div class="abs" style="left:1018.4px;top:642.2px;width:16.8px;height:16.4px;background:#cdac6c;z-index:11"></div>
<div class="abs t tt" style="left:1046.5px;top:640.9px;z-index:11">Jarraff</div>
<div class="abs t tt" style="right:382.5px;top:640.9px;z-index:11;letter-spacing:-.35px">23.53%</div>
<div class="abs" style="left:1018.4px;top:676.6px;width:16.8px;height:16.4px;background:#5985d0;z-index:11"></div>
<div class="abs t tt" style="left:1046.5px;top:675.3px;z-index:11">No Work</div>
<div class="abs t tt" style="right:382.5px;top:675.3px;z-index:11;letter-spacing:-.35px">28.31%</div>
<svg class="abs" style="left:1258px;top:543px;z-index:12;filter:drop-shadow(0 2px 2px rgba(0,0,0,.3))" width="32" height="32" viewBox="0 0 32 32"><path d="M4.6 4.5 11.5 24.4 15 20.6 21.6 26.2 26.2 21.6 19.6 15.8 24.6 12.2z" fill="#000" stroke="#fff" stroke-width="2.2" stroke-linejoin="miter"/></svg>
</div>
</body></html>
